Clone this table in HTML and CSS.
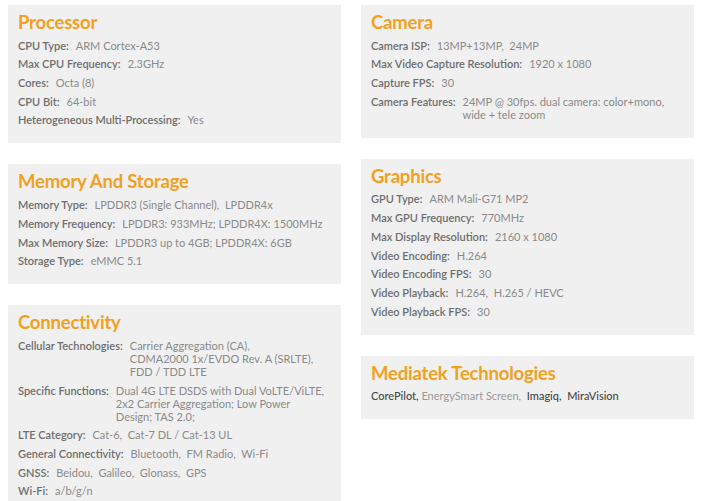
FILE: index.html
```html
<!DOCTYPE html>
<html>
<head>
<meta charset="utf-8">
<link rel="stylesheet" href="styles.css">
</head>
<body>
<div class="page">
  <div class="col">
    <section class="card">
      <h2 class="title">Processor</h2>
      <div class="row"><span class="label">CPU Type:</span><span class="value">ARM Cortex-A53</span></div>
      <div class="row"><span class="label">Max CPU Frequency:</span><span class="value">2.3GHz</span></div>
      <div class="row"><span class="label">Cores:</span><span class="value">Octa (8)</span></div>
      <div class="row"><span class="label">CPU Bit:</span><span class="value">64-bit</span></div>
      <div class="row"><span class="label">Heterogeneous Multi-Processing:</span><span class="value">Yes</span></div>
    </section>
    <section class="card">
      <h2 class="title">Memory And Storage</h2>
      <div class="row"><span class="label">Memory Type:</span><span class="value">LPDDR3 (Single Channel),&nbsp; LPDDR4x</span></div>
      <div class="row"><span class="label">Memory Frequency:</span><span class="value">LPDDR3: 933MHz; LPDDR4X: 1500MHz</span></div>
      <div class="row"><span class="label">Max Memory Size:</span><span class="value">LPDDR3 up to 4GB; LPDDR4X: 6GB</span></div>
      <div class="row"><span class="label">Storage Type:</span><span class="value">eMMC 5.1</span></div>
    </section>
    <section class="card">
      <h2 class="title">Connectivity</h2>
      <div class="row"><span class="label">Cellular Technologies:</span><span class="value">Carrier Aggregation (CA),<br>CDMA2000 1x/EVDO Rev. A (SRLTE),<br>FDD / TDD LTE</span></div>
      <div class="row"><span class="label">Specific Functions:</span><span class="value">Dual 4G LTE DSDS with Dual VoLTE/ViLTE,<br>2x2 Carrier Aggregation; Low Power<br>Design; TAS 2.0;</span></div>
      <div class="row"><span class="label">LTE Category:</span><span class="value">Cat-6,&nbsp; Cat-7 DL / Cat-13 UL</span></div>
      <div class="row"><span class="label">General Connectivity:</span><span class="value">Bluetooth,&nbsp; FM Radio,&nbsp; Wi-Fi</span></div>
      <div class="row"><span class="label">GNSS:</span><span class="value">Beidou,&nbsp; Galileo,&nbsp; Glonass,&nbsp; GPS</span></div>
      <div class="row"><span class="label">Wi-Fi:</span><span class="value">a/b/g/n</span></div>
    </section>
  </div>
  <div class="col">
    <section class="card">
      <h2 class="title">Camera</h2>
      <div class="row"><span class="label">Camera ISP:</span><span class="value">13MP+13MP,&nbsp; 24MP</span></div>
      <div class="row"><span class="label">Max Video Capture Resolution:</span><span class="value">1920 x 1080</span></div>
      <div class="row"><span class="label">Capture FPS:</span><span class="value">30</span></div>
      <div class="row"><span class="label">Camera Features:</span><span class="value">24MP @ 30fps. dual camera: color+mono,<br>wide + tele zoom</span></div>
    </section>
    <section class="card">
      <h2 class="title">Graphics</h2>
      <div class="row"><span class="label">GPU Type:</span><span class="value">ARM Mali-G71 MP2</span></div>
      <div class="row"><span class="label">Max GPU Frequency:</span><span class="value">770MHz</span></div>
      <div class="row"><span class="label">Max Display Resolution:</span><span class="value">2160 x 1080</span></div>
      <div class="row"><span class="label">Video Encoding:</span><span class="value">H.264</span></div>
      <div class="row"><span class="label">Video Encoding FPS:</span><span class="value">30</span></div>
      <div class="row"><span class="label">Video Playback:</span><span class="value">H.264,&nbsp; H.265 / HEVC</span></div>
      <div class="row"><span class="label">Video Playback FPS:</span><span class="value">30</span></div>
    </section>
    <section class="card">
      <h2 class="title">Mediatek Technologies</h2>
      <div class="row tech"><span class="dark">CorePilot,</span>&nbsp;<span class="light">EnergySmart Screen,</span>&nbsp; <span class="dark">Imagiq,</span>&nbsp; <span class="dark">MiraVision</span></div>
    </section>
  </div>
</div>
</body>
</html>
```

FILE: styles.css
```css
html, body {
  margin: 0;
  padding: 0;
  background: #ffffff;
}
body {
  font-family: "Lato", "Open Sans", sans-serif;
}
.page {
  display: grid;
  grid-template-columns: 1fr 1fr;
  column-gap: 20px;
  padding: 5px 8px 0 8px;
  align-items: start;
}
.col {
  display: flex;
  flex-direction: column;
  gap: 21px;
}
.card {
  background: #f0f0f0;
  padding: 5px 10px 17px 10px;
  display: flex;
  flex-direction: column;
  gap: 5.7px;
}
.title {
  margin: 0 0 -1px 0;
  font-size: 18.5px;
  line-height: 24px;
  font-weight: 700;
  letter-spacing: -0.2px;
  color: #f2a11f;
}
.row {
  display: flex;
  font-size: 11px;
  line-height: 13px;
  color: #8a8a8a;
}
.label {
  flex-shrink: 0;
  font-weight: 600;
  color: #6e6e6e;
  margin-right: 7px;
}
.value {
  color: #8a8a8a;
}
.tech {
  display: block;
}
.dark {
  color: #474747;
  font-weight: 500;
}
.light {
  color: #9a9a9a;
}
```
